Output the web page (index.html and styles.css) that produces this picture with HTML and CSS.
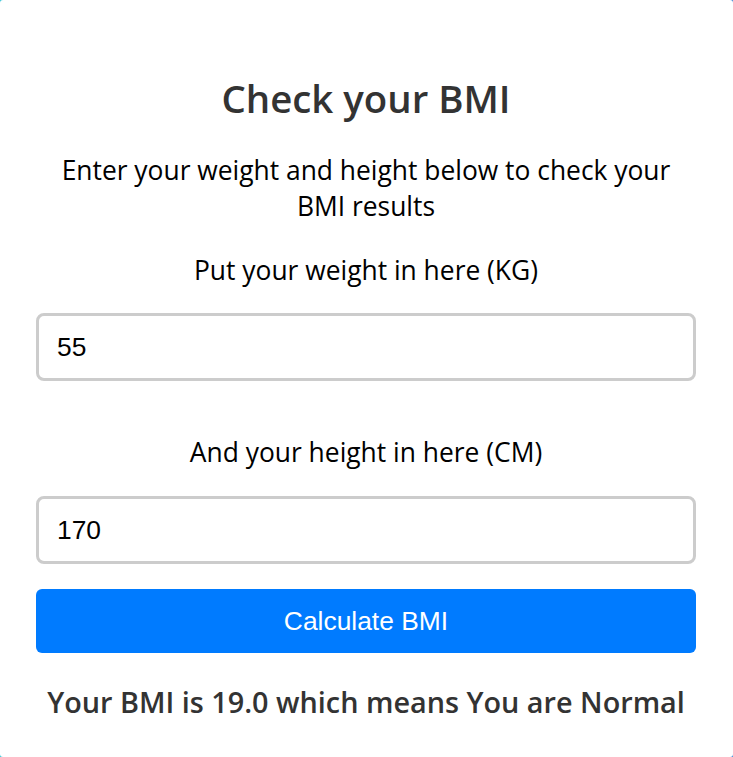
FILE: index.html
```html
<!DOCTYPE html>
<html>
<head>
<meta charset="utf-8">
<link rel="stylesheet" href="styles.css">
</head>
<body>
<div class="card">
  <h1 class="title">Check your BMI</h1>
  <p class="intro">Enter your weight and height below to check your BMI results</p>
  <label class="label" for="w">Put your weight in here (KG)</label>
  <input class="field" id="w" type="text" value="55">
  <label class="label label-gap" for="h">And your height in here (CM)</label>
  <input class="field field-second" id="h" type="text" value="170">
  <button class="btn">Calculate BMI</button>
  <p class="result">Your BMI is 19.0 which means You are Normal</p>
</div>
</body>
</html>
```
FILE: styles.css
```css
html, body {
  margin: 0;
  padding: 0;
}
body {
  background: linear-gradient(90deg, #3cc8d8, #4a90d9);
  min-height: 757px;
}
.card {
  background: #fff;
  border-radius: 3px;
  min-height: 757px;
  box-sizing: border-box;
  padding: 70px 37px 0 36px;
  display: flex;
  flex-direction: column;
  align-items: stretch;
  font-family: "Open Sans", sans-serif;
  text-align: center;
}
.card > * {
  flex-shrink: 0;
}
.title {
  margin: 0;
  font-size: 38.4px;
  font-weight: 600;
  line-height: 56px;
  color: #333;
}
.intro {
  margin: 26px 0 0;
  font-size: 26.4px;
  line-height: 36px;
  color: #000;
  padding: 0 20px;
}
.label {
  display: block;
  margin-top: 28px;
  font-size: 26.4px;
  line-height: 36px;
  color: #000;
}
.label-gap {
  margin-top: 53px;
}
.field {
  margin-top: 25px;
  height: 68px;
  box-sizing: border-box;
  border: 3px solid #ccc;
  border-radius: 8px;
  padding: 0 18px;
  font-family: "Liberation Sans", Arial, sans-serif;
  font-size: 26.4px;
  color: #000;
  outline: none;
}
.field-second {
  margin-top: 26px;
}
.btn {
  margin-top: 25px;
  height: 64px;
  border: none;
  border-radius: 6px;
  background: #007bff;
  color: #fff;
  font-family: "Liberation Sans", Arial, sans-serif;
  font-size: 26.4px;
}
.result {
  margin: 29px 0 0;
  font-size: 28.8px;
  font-weight: 600;
  line-height: 40px;
  color: #333;
}
```
